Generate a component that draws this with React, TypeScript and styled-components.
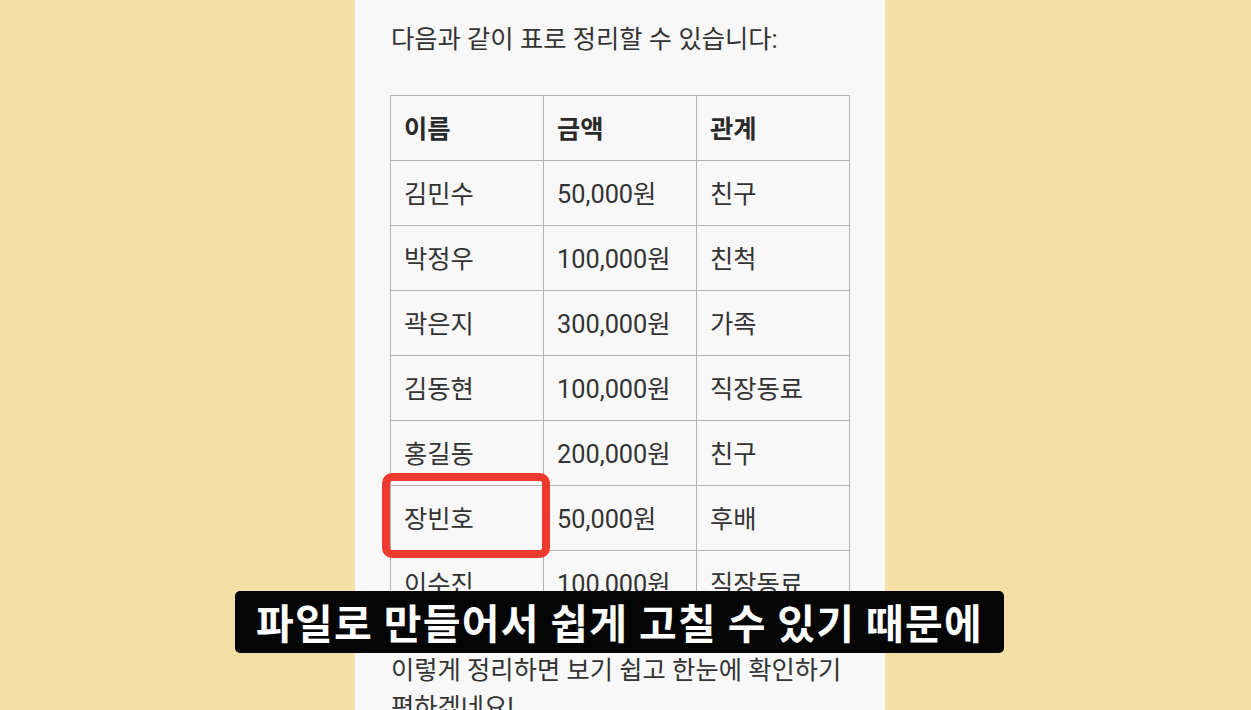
import React from "react";
import styled, { createGlobalStyle } from "styled-components";

const Global = createGlobalStyle`
  html, body { margin: 0; padding: 0; }
  body {
    width: 1251px;
    height: 710px;
    overflow: hidden;
    background: #f4e0a6;
    font-family: Roboto, "Noto Sans CJK KR", sans-serif;
  }
`;

const Stage = styled.div`
  position: relative;
  width: 1251px;
  height: 710px;
  display: flex;
  justify-content: center;
  overflow: hidden;
`;

const Panel = styled.div`
  width: 530px;
  margin-left: -11px;
  background: #f8f8f8;
  padding: 21px 35px 0 35px;
  box-sizing: border-box;
  color: #333;
  font-family: Roboto, "Noto Sans CJK KR", sans-serif;
  font-size: 25.3px;
`;

const Para = styled.p`
  margin: 0 0 0 1px;
  line-height: 37px;
  white-space: nowrap;
`;

const Table = styled.table`
  width: 460px;
  border-collapse: collapse;
  margin: 37px 0 36px 0;
  table-layout: fixed;
`;

const Cell = styled.td<{ $head?: boolean }>`
  position: relative;
  border: 1px solid #b3b3b3;
  height: 61px;
  padding: 0 0 3px 13px;
  font-weight: ${(p) => (p.$head ? 700 : 400)};
  color: ${(p) => (p.$head ? "#2a2a2a" : "#333")};
  vertical-align: middle;
  text-align: left;
`;

const Highlight = styled.div`
  position: absolute;
  left: -9px;
  top: -13px;
  right: -7px;
  bottom: -8px;
  border: 8px solid #ee3a2e;
  border-radius: 10px;
  pointer-events: none;
`;

const Subtitle = styled.div`
  position: absolute;
  left: 235px;
  top: 591px;
  width: 769px;
  height: 62px;
  background: #050505;
  border-radius: 5px;
  display: flex;
  align-items: center;
  justify-content: center;
  color: #fff;
  font-family: "Noto Sans CJK KR", sans-serif;
  font-weight: 700;
  font-size: 41px;
  letter-spacing: 1.3px;
  padding-bottom: 3px;
  box-sizing: border-box;
  white-space: nowrap;
`;

const rows: [string, string, string][] = [
  ["김민수", "50,000원", "친구"],
  ["박정우", "100,000원", "친척"],
  ["곽은지", "300,000원", "가족"],
  ["김동현", "100,000원", "직장동료"],
  ["홍길동", "200,000원", "친구"],
  ["장빈호", "50,000원", "후배"],
  ["이수진", "100,000원", "직장동료"],
];

export default function App() {
  return (
    <>
      <Global />
      <Stage>
        <Panel>
          <Para>다음과 같이 표로 정리할 수 있습니다:</Para>
          <Table>
            <tbody>
              <tr>
                <Cell $head>이름</Cell>
                <Cell $head>금액</Cell>
                <Cell $head>관계</Cell>
              </tr>
              {rows.map(([n, a, r]) => (
                <tr key={n}>
                  <Cell>
                    {n}
                    {n === "장빈호" && <Highlight />}
                  </Cell>
                  <Cell>{a}</Cell>
                  <Cell>{r}</Cell>
                </tr>
              ))}
            </tbody>
          </Table>
          <Para>이렇게 정리하면 보기 쉽고 한눈에 확인하기</Para>
          <Para>편하겠네요!</Para>
        </Panel>
        <Subtitle>파일로 만들어서 쉽게 고칠 수 있기 때문에</Subtitle>
      </Stage>
    </>
  );
}
